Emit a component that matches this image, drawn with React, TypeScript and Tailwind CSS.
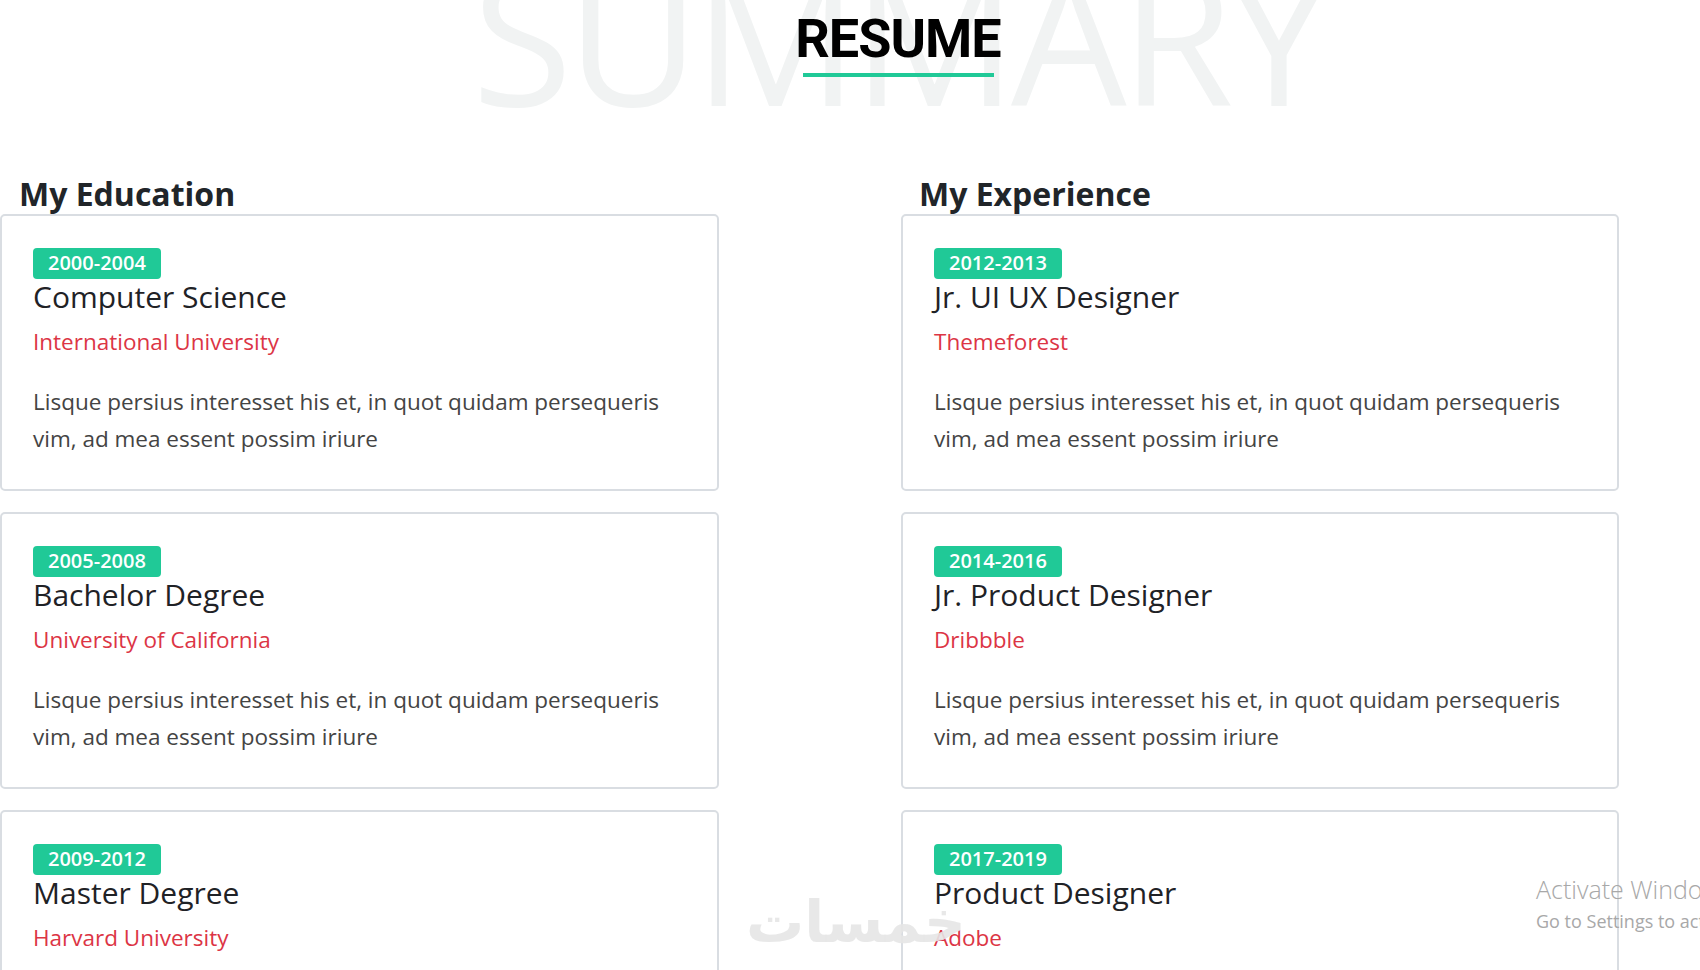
import React from "react";

type Entry = {
  years: string;
  title: string;
  place: string;
  text: string;
};

const lorem = "Lisque persius interesset his et, in quot quidam persequeris vim, ad mea essent possim iriure";

const education: Entry[] = [
  { years: "2000-2004", title: "Computer Science", place: "International University", text: lorem },
  { years: "2005-2008", title: "Bachelor Degree", place: "University of California", text: lorem },
  { years: "2009-2012", title: "Master Degree", place: "Harvard University", text: lorem },
];

const experience: Entry[] = [
  { years: "2012-2013", title: "Jr. UI UX Designer", place: "Themeforest", text: lorem },
  { years: "2014-2016", title: "Jr. Product Designer", place: "Dribbble", text: lorem },
  { years: "2017-2019", title: "Product Designer", place: "Adobe", text: lorem },
];

function ResumeCard({ item }: { item: Entry }) {
  return (
    <div className="mb-[21px] rounded-[5px] border-2 border-[#d9dde2] bg-white pt-[32px] pr-[36px] pb-[32px] pl-[31px]">
      <span className="inline-block h-[31px] rounded-[4px] bg-[#20c997] px-[15px] text-[20px] leading-[30px] font-semibold text-white">
        {item.years}
      </span>
      <h3 className="text-[30px] leading-[1.2] font-normal text-[#1f2226]">{item.title}</h3>
      <p className="mt-[10px] text-[22.5px] leading-[33px] text-[#dc3545]">{item.place}</p>
      <p className="mt-[25px] text-[22.5px] leading-[37px] text-[#444444]">{item.text}</p>
    </div>
  );
}

function Column({ heading, items, indent }: { heading: string; items: Entry[]; indent: string }) {
  return (
    <div>
      <h2 className={`${indent} mb-[1px] text-[32px] leading-[1.15] font-bold text-[#212529]`}>{heading}</h2>
      {items.map((it) => (
        <ResumeCard key={it.years} item={it} />
      ))}
    </div>
  );
}

export default function App() {
  return (
    <div className="relative h-[970px] overflow-hidden bg-white font-['Open_Sans',sans-serif]">
      <header className="flex justify-center pl-[96px]">
        <div className="relative flex flex-col items-center pt-[12px]">
          <span
            aria-hidden
            className="pointer-events-none absolute top-[-56px] left-1/2 -translate-x-1/2 text-[183px] leading-none font-normal tracking-[-6px] whitespace-nowrap text-[#f1f3f3] select-none"
          >
            SUMMARY
          </span>
          <h1 className="relative font-['Roboto',sans-serif] text-[54px] leading-none font-bold tracking-[-1px] text-black">
            RESUME
          </h1>
          <div className="relative mt-[7px] h-[4px] w-[191px] bg-[#20c997]" />
        </div>
      </header>

      <section className="mt-[99px] grid grid-cols-[719px_718px] gap-x-[182px]">
        <Column heading="My Education" items={education} indent="pl-[19px]" />
        <Column heading="My Experience" items={experience} indent="pl-[18px]" />
      </section>

      {/* screenshot overlays */}
      <div className="pointer-events-none absolute top-[893px] left-[746px] font-['DejaVu_Sans',sans-serif] text-[58px] leading-none font-bold text-[#e6e6e6]/90">
        خمسات
      </div>
      <div className="pointer-events-none absolute top-[872px] left-[1536px] whitespace-nowrap text-[#a8a8a8]">
        <p className="text-[25px] leading-[34px] font-light">Activate Windows</p>
        <p className="mt-[2px] text-[18px] leading-[26px]">Go to Settings to activate Windows.</p>
      </div>
    </div>
  );
}
